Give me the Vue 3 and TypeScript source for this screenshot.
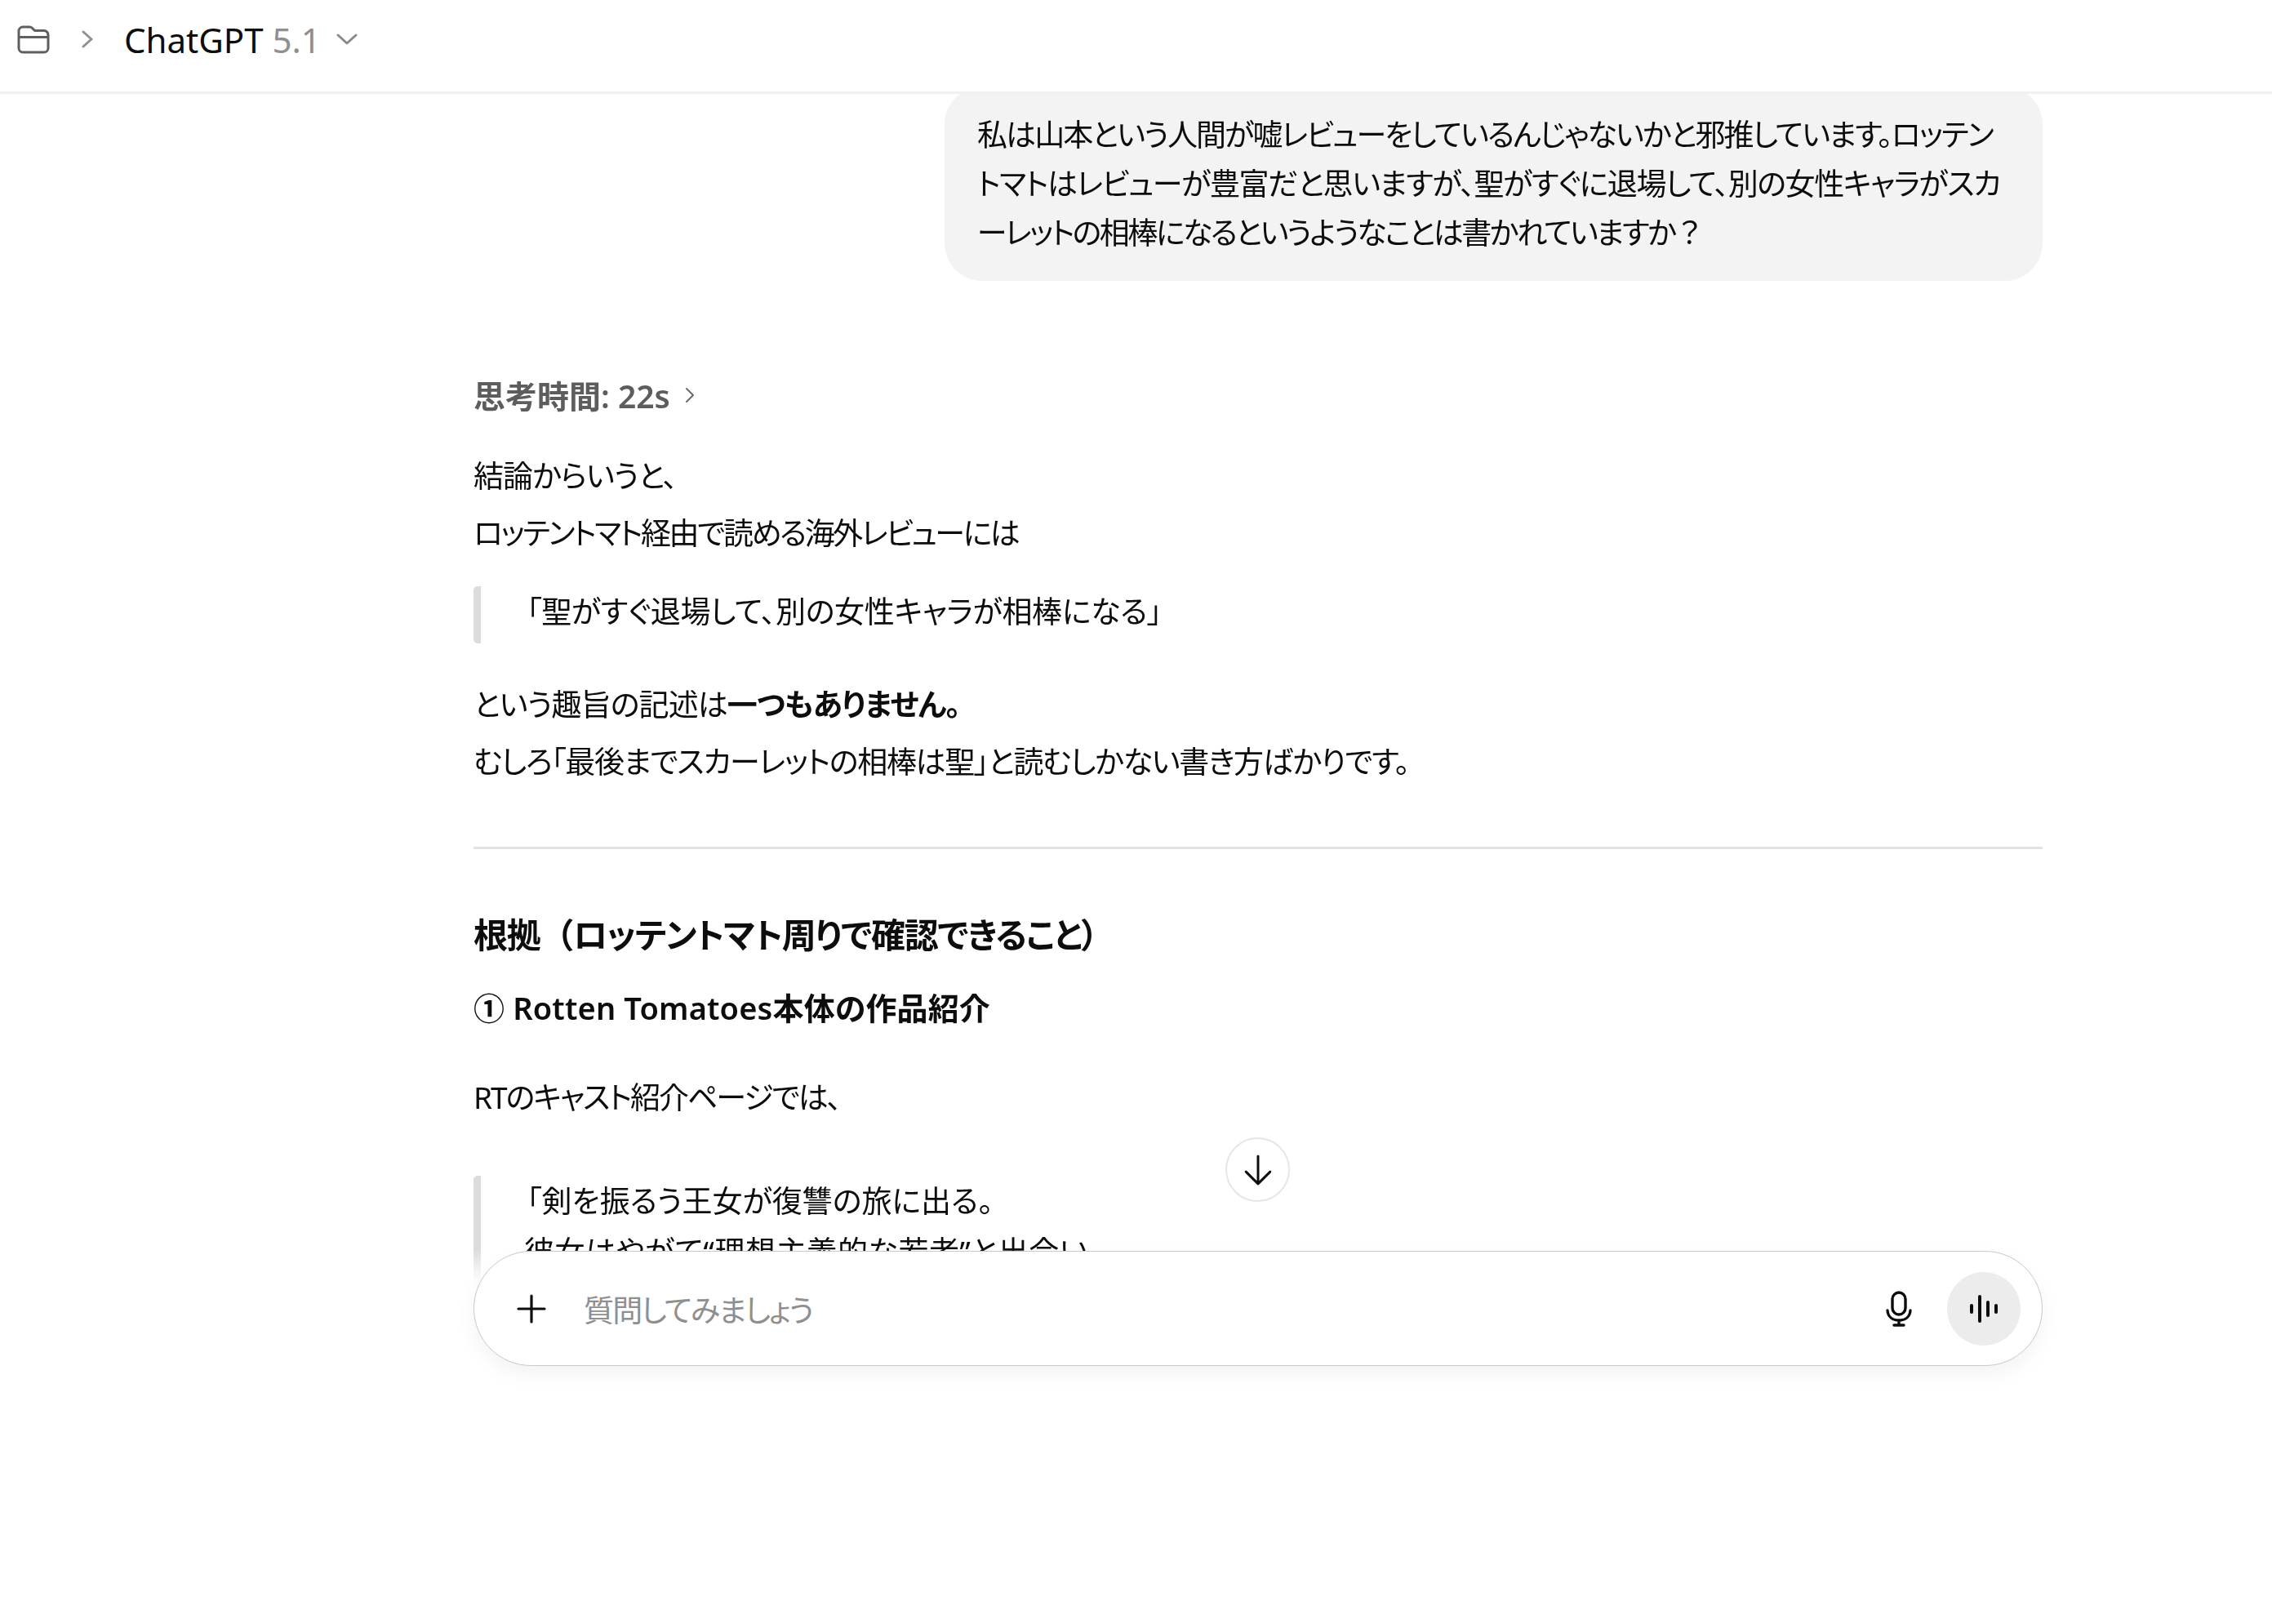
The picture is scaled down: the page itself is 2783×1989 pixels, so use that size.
<script setup lang="ts">
const bubbleLines: { text: string; cls: string }[] = [
  { text: '私は山本という人間が嘘レビューをしているんじゃないかと邪推しています。ロッテン', cls: 'tight-a' },
  { text: 'トマトはレビューが豊富だと思いますが、聖がすぐに退場して、別の女性キャラがスカ', cls: 'tight-b' },
  { text: 'ーレットの相棒になるというようなことは書かれていますか', cls: 'tight-c' },
]
</script>

<template>
  <div class="page">
    <header class="topbar">
      <svg class="folder" viewBox="0 0 40 36" fill="none" stroke="#5f5f5f" stroke-width="3" stroke-linejoin="round">
        <path d="M2 8a5 5 0 0 1 5-5h8.500c1.600 0 2.600.8 3.600 2l1.400 1.600c.6.7 1.200 1 2.200 1H33a5 5 0 0 1 5 5V29a5 5 0 0 1-5 5H7a5 5 0 0 1-5-5z" />
        <path d="M2 15.500h36" />
      </svg>
      <svg class="crumb" viewBox="0 0 14 22" fill="none" stroke="#8f8f8f" stroke-width="3" stroke-linecap="round" stroke-linejoin="round">
        <path d="M2 2l10 9-10 9" />
      </svg>
      <span class="model">ChatGPT <span class="version">5.1</span></span>
      <svg class="caret" viewBox="0 0 26 16" fill="none" stroke="#8a8a8a" stroke-width="3" stroke-linecap="round" stroke-linejoin="round">
        <path d="M2 3l11 10L24 3" />
      </svg>
      <span class="account">J</span>
    </header>

    <main class="thread">
      <div class="bubble">
        <div v-for="line in bubbleLines" :key="line.text" :class="line.cls">
          {{ line.text }}<span v-if="line.cls === 'tight-c'" class="full">？</span>
        </div>
      </div>

      <div class="thought">
        思考時間: 22s
        <svg class="thought-icon" viewBox="0 0 12 20" fill="none" stroke="#6a6a6a" stroke-width="2" stroke-linecap="round" stroke-linejoin="round">
          <path d="M2 2l8 8-8 8" />
        </svg>
      </div>

      <div class="para">
        <div class="tight-d">結論からいうと、</div>
        <div class="tight-e">ロッテントマト経由で読める海外レビューには</div>
      </div>
      <blockquote class="quote short"><span class="quote-text">「聖がすぐ退場して、別の女性キャラが相棒になる」</span></blockquote>
      <div class="para after-quote">
        <div class="tight-f">という趣旨の記述は<strong>一つもありません。</strong></div>
        <div class="tight-g">むしろ「最後までスカーレットの相棒は聖」と読むしかない書き方ばかりです。</div>
      </div>
      <hr class="rule" />
      <h2 class="heading">根拠<span class="full">（</span>ロッテントマト周りで確認できること）</h2>
      <h3 class="subheading">① Rotten Tomatoes本体の作品紹介</h3>
      <p class="para cast tight-h">RTのキャスト紹介ページでは、</p>
      <blockquote class="quote long">
        <div>「剣を振るう王女が復讐の旅に出る。</div>
        <div class="quote-second">彼女はやがて“理想主義的な若者”と出会い</div>
      </blockquote>
    </main>

    <button class="down" type="button" aria-label="下へスクロール">
      <svg viewBox="0 0 36 36" fill="none" stroke="#0d0d0d" stroke-width="2.800" stroke-linecap="round" stroke-linejoin="round">
        <path d="M18 2v32M4 20l14 14 14-14" />
      </svg>
    </button>

    <div class="composer">
      <svg class="plus" viewBox="0 0 36 36" fill="none" stroke="#0d0d0d" stroke-width="3.200" stroke-linecap="round">
        <path d="M18 2v32M2 18h32" />
      </svg>
      <span class="placeholder">質問してみましょう</span>
      <svg class="mic" viewBox="0 0 32 44" fill="none" stroke="#0d0d0d" stroke-width="3.400" stroke-linecap="round" stroke-linejoin="round">
        <rect x="8" y="2" width="16" height="27" rx="8" />
        <path d="M2 24c.5 8 6.500 12 14 12s13.500-4 14-12M16 36v6M10 42h12" />
      </svg>
      <span class="voice">
        <svg viewBox="0 0 36 36" fill="#0d0d0d">
          <rect x="1" y="12" width="4" height="12" rx="2" />
          <rect x="11" y="1" width="4" height="34" rx="2" />
          <rect x="21" y="8" width="4" height="20" rx="2" />
          <rect x="31" y="12" width="4" height="12" rx="2" />
        </svg>
      </span>
    </div>
  </div>
</template>

<style scoped>
.page {
  position: relative;
  width: 2783px;
  height: 1989px;
  overflow: hidden;
  background: #fff;
  color: #0d0d0d;
  font-family: "Noto Sans", "Noto Sans CJK JP", sans-serif;
  font-feature-settings: "palt";
}
.full { font-feature-settings: normal; }
.tight-a { letter-spacing: -1.9px; }
.tight-b { letter-spacing: -1.4px; }
.tight-c { letter-spacing: -2.5px; }
.tight-d { letter-spacing: -1px; }
.tight-e { letter-spacing: -2.4px; }
.tight-f { letter-spacing: -0.9px; }
.tight-g { letter-spacing: -1.3px; }
.tight-h { letter-spacing: -2px; }
.topbar {
  position: relative;
  z-index: 2;
  display: flex;
  align-items: center;
  height: 112px;
  padding: 0 0 0 21px;
  border-bottom: 3px solid #f1f1f1;
  background: #fff;
  box-sizing: content-box;
}
.folder { width: 40px; height: 36px; margin-top: -17px; }
.crumb { width: 14px; height: 22px; margin: -16px 0 0 39px; }
.model {
  margin: -14px 0 0 38px;
  font-size: 42px;
  line-height: 60px;
}
.version { color: #8f8f8f; }
.caret { width: 26px; height: 16px; margin: -16px 0 0 19px; }
.account {
  margin: 12px -22px 0 auto;
  font-size: 40px;
  font-weight: 600;
}
.thread {
  display: flex;
  flex-direction: column;
  width: 1922px;
  height: 1464px;
  margin: -9px 0 0 580px;
  overflow: hidden;
  font-size: 37px;
  line-height: 70px;
  -webkit-mask-image: linear-gradient(to bottom, #000 calc(100% - 40px), transparent);
  mask-image: linear-gradient(to bottom, #000 calc(100% - 40px), transparent);
}
.bubble {
  align-self: flex-end;
  box-sizing: border-box;
  width: 1345px;
  height: 238px;
  padding: 29px 40px;
  border-radius: 46px;
  background: #f3f3f3;
  line-height: 60px;
  white-space: nowrap;
  flex: none;
}
.thought {
  display: flex;
  align-items: center;
  gap: 18px;
  margin-top: 106px;
  height: 70px;
  color: #5d5d5d;
  font-weight: 600;
  font-size: 39px;
  flex: none;
}
.thought-icon { width: 12px; height: 20px; margin-top: -3px; }
.para { margin: 28px 0 0; flex: none; }
.quote {
  margin: 30px 0 0;
  padding-left: 56px;
  border-left: 9px solid #dcdcdc;
  border-radius: 5px;
  flex: none;
}
.short { height: 70px; line-height: 62px; }
.quote-text { letter-spacing: -0.3px; }
.long { margin-top: 61px; height: 300px; line-height: 62px; }
.quote-second { letter-spacing: 0.6px; margin-left: -3px; }
.after-quote { margin-top: 40px; }
.rule {
  width: 100%;
  height: 3px;
  margin: 69px 0 0;
  border: 0;
  background: #e3e3e3;
  flex: none;
}
.heading {
  margin: 70px 0 0;
  font-size: 42px;
  font-weight: 700;
  line-height: 70px;
  letter-spacing: -1.300px;
  flex: none;
}
.subheading {
  margin: 19px 0 0;
  font-size: 38px;
  font-weight: 600;
  line-height: 70px;
  letter-spacing: 0.150px;
  flex: none;
}
.cast { margin-top: 40px; }
.down {
  position: absolute;
  left: 1501px;
  top: 1393px;
  display: flex;
  align-items: center;
  justify-content: center;
  box-sizing: border-box;
  width: 79px;
  height: 79px;
  padding: 0;
  border: 2px solid #e6e6e6;
  border-radius: 50%;
  background: #fff;
}
.down svg { width: 38px; height: 38px; }
.composer {
  position: absolute;
  left: 580px;
  top: 1532px;
  display: flex;
  align-items: center;
  box-sizing: border-box;
  width: 1922px;
  height: 141px;
  padding: 0 26px 0 52px;
  border: 1.500px solid #c9c9c9;
  border-radius: 71px;
  background: #fff;
  box-shadow: 0 10px 24px rgba(0, 0, 0, 0.05);
}
.plus { width: 36px; height: 36px; flex: none; }
.placeholder {
  margin-left: 46px;
  color: #8f8f8f;
  font-size: 37px;
  letter-spacing: -1.800px;
}
.mic { width: 32px; height: 44px; margin-left: auto; flex: none; }
.voice {
  display: flex;
  align-items: center;
  justify-content: center;
  width: 90px;
  height: 90px;
  margin-left: 43px;
  border-radius: 50%;
  background: #ececec;
  flex: none;
}
.voice svg { width: 36px; height: 36px; }
</style>
